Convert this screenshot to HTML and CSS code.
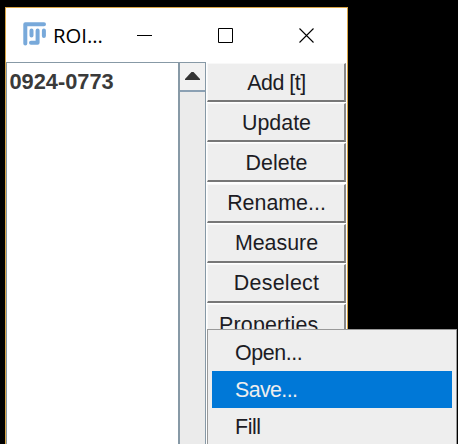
FILE: index.html
```html
<!DOCTYPE html>
<html lang="en">
<head>
<meta charset="utf-8">
<title>ROI Manager</title>
<link rel="stylesheet" href="styles.css">
</head>
<body>
<div class="window">
  <header class="titlebar">
    <svg class="logo" width="24" height="24" viewBox="0 0 24 24" fill="none" stroke="#78a9da" stroke-width="4" stroke-linecap="round" stroke-linejoin="round">
      <path d="M2.300 21.500V2.300H21"/>
      <path d="M8.500 8.500V13.500M8 20.800H14.600V8.500M20.900 8.500V14"/>
    </svg>
    <span class="title">ROI...</span>
    <svg class="controls" width="178" height="16" viewBox="0 0 178 16" fill="none" stroke="#000">
      <path d="M1 8.500H16M82.500 1.500H96.500V15.500H82.500Z"/>
      <path d="M163.500 1.500L177.500 15.500M177.500 1.500L163.500 15.500" stroke-width="1.100"/>
    </svg>
  </header>
  <main class="content">
    <div class="list">0924-0773</div>
    <div class="scrollbar">
      <div class="arrow"><svg width="15" height="8" viewBox="0 0 15 8"><path d="M0 8V7L6.500 0H8.500L15 7V8Z" fill="#333"/></svg></div>
    </div>
    <div class="buttons">
      <button class="tight">Add [t]</button>
      <button>Update</button>
      <button>Delete</button>
      <button>Rename...</button>
      <button>Measure</button>
      <button class="loose">Deselect</button>
      <button class="left">Properties...</button>
    </div>
  </main>
</div>
<div class="menu">
  <div class="item">Open...</div>
  <div class="item selected">Save...</div>
  <div class="item">Fill</div>
</div>
</body>
</html>
```
FILE: styles.css
```css
* { box-sizing: border-box; }
body {
  margin: 0;
  height: 444px;
  overflow: hidden;
  background: #000;
  padding: 7px 0 0 5px;
  font-family: "Liberation Sans", Arial, sans-serif;
  font-size: 21.4px;
  color: #1c1c24;
}
.window {
  width: 343px;
  height: 437px;
  overflow: hidden;
  background: #fff;
  border: 1px solid #d9a546;
  border-bottom: 0;
}
.titlebar {
  height: 54px;
  display: flex;
  align-items: center;
  padding-left: 17px;
}
.logo { margin-top: -3px; }
.title {
  width: 73px;
  margin-left: 6px;
  font: 20.3px/28px "Open Sans", "Segoe UI", sans-serif;
  color: #000;
}
.controls { margin-left: 10px; }
.content { display: flex; height: 382px; }
.list {
  width: 172px;
  border: 1px solid #8799a6;
  border-width: 1px 0 0 1px;
  padding: 6px 0 0 2.5px;
  font-weight: bold;
  font-size: 21.8px;
  line-height: 25px;
  color: #3a3a3a;
}
.scrollbar {
  width: 28px;
  border: solid #8799a6;
  border-width: 1px 1px 0 2px;
  background: #ebebeb;
}
.arrow {
  height: 29px;
  display: flex;
  justify-content: center;
  padding-top: 9px;
  background: #f1f1f1;
  border: solid #8ba0b3;
  border-width: 0 0 2px;
}
.buttons {
  width: 140px;
  margin-left: 1px;
  padding-top: 1px;
}
button {
  display: block;
  width: 139px;
  height: 39px;
  margin-bottom: 1.2px;
  padding: 2px 0 0 1px;
  border: solid;
  border-width: 1px 2px 2px 1px;
  border-color: #f8f8f8 #888 #777 #f8f8f8;
  background: #eee;
  color: inherit;
  font: inherit;
  white-space: nowrap;
}
button.tight { letter-spacing: -0.5px; }
button.loose { letter-spacing: 0.3px; }
button.left { text-align: left; padding: 4px 0 0 11px; letter-spacing: 0.2px; }
.menu {
  position: absolute;
  left: 207px;
  top: 329px;
  width: 250px;
  height: 130px;
  padding: 4px;
  background: #eee;
  border: 1px solid #999;
}
.item {
  height: 37px;
  padding-left: 23px;
  line-height: 38px;
  letter-spacing: -0.4px;
}
.selected { background: #0078d7; color: #eee; letter-spacing: -0.6px; }
```
